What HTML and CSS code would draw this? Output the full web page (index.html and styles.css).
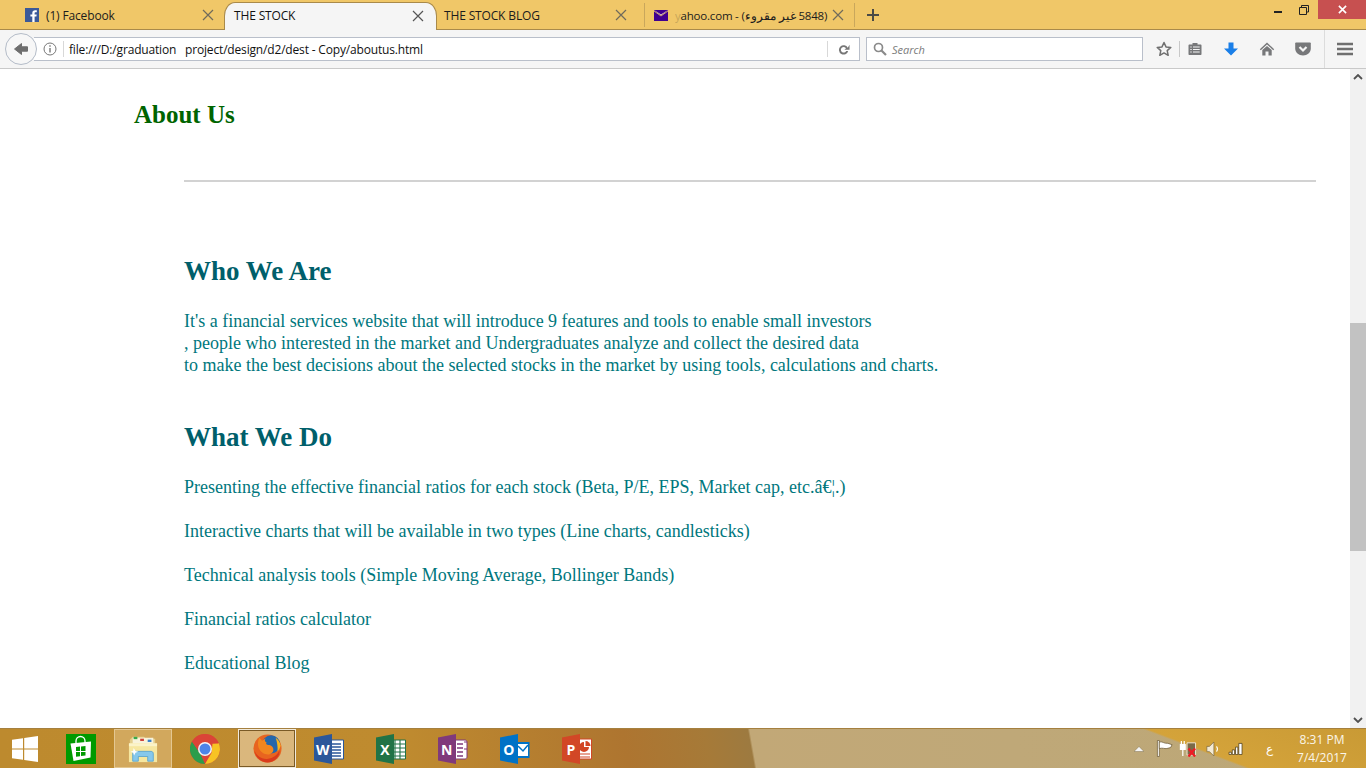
FILE: index.html
```html
<!DOCTYPE html>
<html lang="en">
<head>
<meta charset="utf-8">
<title>THE STOCK</title>
<link rel="stylesheet" href="styles.css">
</head>
<body>
<div class="browser">
  <header class="tabbar">
    <div class="tab tab-fb">
      <svg class="favicon" viewBox="0 0 14 14"><rect width="14" height="14" fill="#3b5998"/><path d="M9.6 14V8.6h1.8l.3-2.1H9.6V5.2c0-.6.2-1 1-1h1.2V2.3c-.3 0-.9-.1-1.700-.1-1.700 0-2.800 1-2.800 2.800v1.500H5.400v2.100h1.900V14z" fill="#fff"/></svg>
      <span class="tab-label">(1) Facebook</span>
      <svg class="tab-close" viewBox="0 0 12 12"><path d="M1 1l10 10M11 1L1 11" stroke="#6f6a5c" stroke-width="1.200" fill="none"/></svg>
    </div>
    <div class="tab tab-active">
      <span class="tab-label">THE STOCK</span>
      <svg class="tab-close" viewBox="0 0 12 12"><path d="M1 1l10 10M11 1L1 11" stroke="#555" stroke-width="1.200" fill="none"/></svg>
    </div>
    <div class="tab tab-blog">
      <span class="tab-label">THE STOCK BLOG</span>
      <svg class="tab-close" viewBox="0 0 12 12"><path d="M1 1l10 10M11 1L1 11" stroke="#6f6a5c" stroke-width="1.200" fill="none"/></svg>
    </div>
    <div class="tab tab-mail">
      <svg class="favicon-mail" viewBox="0 0 14 11"><rect width="14" height="11" fill="#400090"/><path d="M0 0l7 5.500L14 0z" fill="#f2e6cf"/><path d="M0 0h14L7 4.500z" fill="#400090"/><path d="M0 1l7 5 7-5" stroke="#f0c868" stroke-width=".8" fill="none"/></svg>
      <span class="tab-label mail-label" dir="ltr"><span class="fade">y</span>ahoo.com - (<span dir="rtl">5848 غير مقروء</span>)</span>
      <svg class="tab-close" viewBox="0 0 12 12"><path d="M1 1l10 10M11 1L1 11" stroke="#6f6a5c" stroke-width="1.200" fill="none"/></svg>
    </div>
    <div class="new-tab">
      <svg viewBox="0 0 12 12" class="plus"><path d="M6 0v12M0 6h12" stroke="#4a4a45" stroke-width="2" fill="none"/></svg>
    </div>
    <div class="window-controls">
      <div class="win-btn"><span class="win-min"></span></div>
      <div class="win-btn">
        <svg class="win-restore" viewBox="0 0 10 10"><path d="M2.500 2.500V.5h7v6.500H7.500M.5 2.500h7v7h-7z" stroke="#222" fill="none"/></svg>
      </div>
      <div class="win-close">
        <svg viewBox="0 0 10 10" class="win-x"><path d="M1 1l8 8M9 1l-8 8" stroke="#fff" stroke-width="1.800" fill="none"/></svg>
      </div>
    </div>
  </header>

  <nav class="navbar">
    <div class="back">
      <svg viewBox="0 0 16 16" class="back-icon"><path d="M8.500 2.500L1.500 8l7 5.500v-3.300h6V5.800h-6z" fill="#6e6e6e" stroke="#6e6e6e" stroke-linejoin="round"/></svg>
    </div>
    <div class="urlbar">
      <svg viewBox="0 0 14 14" class="info"><circle cx="7" cy="7" r="6" stroke="#777" fill="none"/><path d="M7 6v4.500M7 3.200v1.600" stroke="#777" stroke-width="1.400"/></svg>
      <span class="url-sep"></span>
      <span class="url-text">file:///D:/graduation&nbsp;&nbsp; project/design/d2/dest - Copy/aboutus.html</span>
      <span class="url-sep url-sep-right"></span>
      <svg viewBox="0 0 14 14" class="reload"><path d="M11.600 5.200A5 5 0 1 0 12 8.500H9.900A3 3 0 1 1 9.700 5.600L8 7.200h5.500V1.800z" fill="#777"/></svg>
    </div>
    <div class="searchbar">
      <svg viewBox="0 0 14 14" class="search-icon"><circle cx="5.500" cy="5.500" r="4" stroke="#8a8a8a" stroke-width="1.700" fill="none"/><path d="M8.500 8.500L13 13" stroke="#8a8a8a" stroke-width="2.200"/></svg>
      <span class="search-text">Search</span>
    </div>
    <svg viewBox="0 0 16 16" class="tool star"><path d="M8 1.500l2 4.400 4.800.5-3.600 3.200 1 4.700L8 11.900l-4.200 2.400 1-4.700L1.200 6.400 6 5.900z" stroke="#6f6f6f" stroke-width="1.500" fill="none" stroke-linejoin="round"/></svg>
    <span class="tool-sep"></span>
    <svg viewBox="0 0 16 16" class="tool clip"><path d="M2.500 3.500h3V2h5v1.500h3c.6 0 1 .4 1 1V13c0 .6-.4 1-1 1h-11c-.6 0-1-.4-1-1V4.500c0-.6.4-1 1-1z" fill="#77787a"/><path d="M3.300 6h1.400M6 6h6.700M3.300 8.500h1.400M6 8.500h6.700M3.300 11h1.400M6 11h6.700" stroke="#f5f5f5" stroke-width="1.200"/></svg>
    <svg viewBox="0 0 16 16" class="tool download"><path d="M5.500 1.500h5v6H15L8 14.500 1 7.500h4.500z" fill="#1a7fe8"/></svg>
    <svg viewBox="0 0 16 16" class="tool home"><path d="M8 1.500L.8 8.200l1 1L8 3.600l6.200 5.600 1-1z" fill="#77787a"/><path d="M3.300 9L8 4.900 12.700 9v5.500H9.500v-4h-3v4H3.300z" fill="#77787a"/></svg>
    <svg viewBox="0 0 16 16" class="tool pocket"><path d="M1 1.500h14c.5 0 .8.300.8.800V7.500c0 4-3.500 7-7.800 7S.2 11.500.2 7.500V2.300c0-.5.3-.8.800-.8z" fill="#77787a"/><path d="M4.500 6l3.500 3.500L11.500 6" stroke="#f5f5f5" stroke-width="2.200" fill="none"/></svg>
    <span class="tool-divider"></span>
    <svg viewBox="0 0 16 14" class="tool menu"><path d="M0 2h16M0 7h16M0 12h16" stroke="#6f6f6f" stroke-width="2.400"/></svg>
  </nav>

  <div class="viewport">
    <main class="page">
      <h2 class="page-title">About Us</h2>
      <div class="body-col">
        <hr class="rule">
        <h2 class="section who">Who We Are</h2>
        <p class="copy">It's a financial services website that will introduce 9 features and tools to enable small investors<br>, people who interested in the market and Undergraduates analyze and collect the desired data<br>to make the best decisions about the selected stocks in the market by using tools, calculations and charts.</p>
        <h2 class="section what">What We Do</h2>
        <p class="copy item">Presenting the effective financial ratios for each stock (Beta, P/E, EPS, Market cap, etc.â€¦.)</p>
        <p class="copy item">Interactive charts that will be available in two types (Line charts, candlesticks)</p>
        <p class="copy item">Technical analysis tools (Simple Moving Average, Bollinger Bands)</p>
        <p class="copy item">Financial ratios calculator</p>
        <p class="copy item">Educational Blog</p>
      </div>
    </main>
    <aside class="scrollbar">
      <div class="arrow"><svg viewBox="0 0 10 6" class="arrow-icon"><path d="M1 5l4-4 4 4" stroke="#505050" stroke-width="1.800" fill="none"/></svg></div>
      <div class="track"><div class="thumb"></div></div>
      <div class="arrow"><svg viewBox="0 0 10 6" class="arrow-icon"><path d="M1 1l4 4 4-4" stroke="#505050" stroke-width="1.800" fill="none"/></svg></div>
    </aside>
  </div>

  <footer class="taskbar">
    <div class="start">
      <svg viewBox="0 0 26 26" class="win-logo"><path d="M0 3.800l11-1.500v10.100H0zM12.200 2.100L26 0v12.400H12.200zM0 13.600h11v10.100L0 22.200zM12.200 13.600H26V26l-13.800-2z" fill="#fff"/></svg>
    </div>
    <div class="task">
      <svg viewBox="0 0 30 30" class="task-icon"><rect width="30" height="30" fill="#009a00"/><path d="M4.500 9.500L25 7.500l-.5 16L7.500 27z" fill="#fff"/><path d="M10 9V7a4.500 4.500 0 0 1 9 0v2" stroke="#fff" stroke-width="1.300" fill="none"/><path d="M10 13l4-.4v4.400h-4zM15 12.500l4.500-.4v4.900H15zM10 18h4v4.200l-4 .6zM15 18h4.500v3.500l-4.500.6z" fill="#009a00"/></svg>
    </div>
    <div class="task task-open">
      <svg viewBox="0 0 32 30" class="task-icon"><path d="M2 5l3-3h12l2 2h10v12H2z" fill="#e4cf8c"/><path d="M5 3h22v9H5z" fill="#f8f3da"/><path d="M6 2h4v2.500H6z" fill="#3aa94a"/><path d="M13 4h4v2.500h-4z" fill="#d0433a"/><path d="M21 5h4v2.500h-4z" fill="#3a80c9"/><path d="M1 9h30v20H1z" fill="#f6e7a0"/><path d="M1 9h30v3H1z" fill="#fbf3c8"/><path d="M5 28V20c0-1.500 1-2.500 2.500-2.500h17c1.500 0 2.500 1 2.500 2.500v8h-6v-5h-10v5z" fill="#86c8ec" stroke="#4d9ccc" stroke-width=".8"/><path d="M6 14l2 3 3 1-3 1-1.500 3-1-3-3-1 3-1z" fill="#fff"/></svg>
    </div>
    <div class="task">
      <svg viewBox="0 0 30 30" class="task-icon"><circle cx="15" cy="15" r="15" fill="#db4437"/><path d="M15 30A15 15 0 0 1 2 7.500L9.500 18 15 30z" fill="#2c9d4b"/><path d="M28.700 9A15 15 0 0 1 15 30l6.500-11 1-9.500z" fill="#f7c324"/><path d="M2 7.500L9 18l6-8.500h13.700A15 15 0 0 0 2 7.500z" fill="#db4437"/><circle cx="15" cy="15" r="7" fill="#f3f3f3"/><circle cx="15" cy="15" r="5.500" fill="#4b84e8"/></svg>
    </div>
    <div class="task task-active">
      <svg viewBox="0 0 32 32" class="task-icon fx"><circle cx="16" cy="16" r="15.500" fill="#e8641f"/><circle cx="20" cy="11.500" r="10" fill="#2467ab"/><path d="M25 4c3 2 5 5 5.500 9-.8 3-2 5-3.500 6 .5-4-.2-10-2-15z" fill="#f7b51e"/><path d="M7 4l3 3.500L14 5c-1.500 2-1 3.500 1 4.500-1 1-.5 2.500 1.500 2.500 3.500 0 6 2 6 5 0 3-2.500 5.500-6 5.500-4 0-9-3-10.500-8C5 11 5.500 7 7 4z" fill="#f1861f"/><path d="M1.500 18c2 6 8 10 14 9.500 7-.5 12-5 13.500-9.500 1 3-.5 6.500-3 9-3 3-6.500 4.500-10 4.500-7 0-13.500-5.500-14.500-13.500z" fill="#d93b1c"/></svg>
    </div>
    <div class="task">
      <svg viewBox="0 0 30 30" class="task-icon"><path d="M12 6h17.500v19H12z" fill="#fff" stroke="#2b579a"/><path d="M17 10h10M17 13h10M17 16h10M17 19h10M17 22h10" stroke="#2b579a" stroke-width="1.300"/><path d="M0 3.500L18 0v30L0 26.500z" fill="#2b579a"/><text x="8.800" y="21" class="office-letter">W</text></svg>
    </div>
    <div class="task">
      <svg viewBox="0 0 30 30" class="task-icon"><path d="M12 6h17.500v19H12z" fill="#fff" stroke="#217346"/><path d="M19 6v19M24 6v19M18 10h11M18 14h11M18 18h11M18 22h11" stroke="#217346" stroke-width="1.100"/><path d="M0 3.500L18 0v30L0 26.500z" fill="#217346"/><text x="8.800" y="21" class="office-letter">X</text></svg>
    </div>
    <div class="task">
      <svg viewBox="0 0 30 30" class="task-icon"><path d="M12 6h15c1 0 2 1 2 2v15c0 1-1 2-2 2H12z" fill="#fff" stroke="#80397b"/><path d="M19 10h6M19 14h6M19 18h6M19 22h6" stroke="#80397b" stroke-width="1.300"/><path d="M26 8h3M26 15h3" stroke="#80397b"/><path d="M0 3.500L18 0v30L0 26.500z" fill="#80397b"/><text x="8.800" y="21" class="office-letter">N</text></svg>
    </div>
    <div class="task">
      <svg viewBox="0 0 30 30" class="task-icon"><path d="M16 8h13.500v16H16z" fill="#0072c6"/><path d="M17.500 10h10.500v12H17.500z" fill="#fff"/><path d="M18 12l5 5 5-6" stroke="#0072c6" stroke-width="1.500" fill="none"/><path d="M0 3.500L18 0v30L0 26.500z" fill="#0072c6"/><text x="8.800" y="21" class="office-letter">O</text></svg>
    </div>
    <div class="task">
      <svg viewBox="0 0 30 30" class="task-icon"><path d="M12 5h17.500v20H12z" fill="#fff" stroke="#d24726"/><path d="M22 8a5 5 0 1 0 5 5h-5z" fill="#d24726"/><path d="M23.500 7a5 5 0 0 1 5 5h-5z" fill="#d24726"/><path d="M18 20h10M18 23h10" stroke="#d24726" stroke-width="1.200"/><path d="M0 3.500L18 0v30L0 26.500z" fill="#d24726"/><text x="8.800" y="21" class="office-letter">P</text></svg>
    </div>
    <div class="tray">
      <svg viewBox="0 0 10 6" class="tray-up"><path d="M0 5.500L5 .5l5 5z" fill="#f4f4f4" stroke="#6a5a3a" stroke-width=".4"/></svg>
      <svg viewBox="0 0 18 18" class="tray-flag"><path d="M1.500 .5h2v17h-2z" fill="#fff" stroke="#5e4c28" stroke-width=".7"/><path d="M3.500 2c4-.5 5 2 9 1.500L17 5l-1.500 3-4 1c-3 .5-4-1-8 0z" fill="#fff" stroke="#5e4c28" stroke-width=".7"/></svg>
      <svg viewBox="0 0 18 18" class="tray-power"><path d="M1 5h5v5H1zM2 1v4M5 1v4M3.500 10v7" stroke="#fff" stroke-width="1.300" fill="#fff"/><path d="M8 3h9v13H8z" fill="#7a6a48" stroke="#f2ead8"/><path d="M9.500 9l7 8.500M16.500 9l-7 8.500" stroke="#ee1c25" stroke-width="2.400"/></svg>
      <svg viewBox="0 0 16 18" class="tray-sound"><path d="M1 6h3l5-5v16l-5-5H1z" fill="#f3ead6" stroke="#6a5a3a" stroke-width=".7"/><path d="M12 6c1.500 2 1.500 4 0 6" stroke="#fff" fill="none" stroke-width="1.200"/></svg>
      <svg viewBox="0 0 16 14" class="tray-signal"><path d="M.5 11h2.500v2.500H.5zM4 8.500h2.500v5H4zM7.500 5.500H10v8H7.500zM11 1.500h3.500v12H11z" fill="#fff" stroke="#4a3a18" stroke-width=".8"/></svg>
      <span class="tray-lang">ع</span>
      <div class="clock"><span>8:31 PM</span><span>7/4/2017</span></div>
    </div>
  </footer>
</div>
</body>
</html>
```

FILE: styles.css
```css
* { box-sizing: border-box; }
html, body { margin: 0; height: 100%; overflow: hidden; }
body { font-family: "Liberation Serif", "Times New Roman", serif; background: #fff; }

.browser { width: 1366px; height: 768px; display: flex; flex-direction: column; }

/* Tab strip */
.tabbar {
  height: 30px; flex: none; display: flex; align-items: stretch;
  background: #f0c768; border-bottom: 1px solid #a98a4a;
  font-family: "Open Sans", "Noto Sans", sans-serif; font-size: 12px; color: #1c1c1c;
}
.tab { display: flex; align-items: center; flex: none; }
.tab-label { white-space: nowrap; flex: 1; letter-spacing: -.15px; }
.tab-close { width: 12px; height: 12px; flex: none; }
.tab-fb { width: 224px; padding: 1px 10px 0 25px; }
.favicon { width: 14px; height: 14px; margin-right: 7px; flex: none; }
.tab-active {
  width: 213px; padding: 0 12px 2px 9px; margin-top: 2px; margin-bottom: -1px;
  background: #f5f5f5; border-radius: 11px 11px 0 0 / 14px 14px 0 0;
  border: 1px solid #a98a4a; border-bottom: none; color: #111;
}
.tab-blog { width: 208px; padding: 1px 17px 0 7px; border-right: 1px solid #c9a75c; height: 24px; align-self: center; }
.tab-mail { width: 210px; padding: 1px 10px 0 9px; border-right: 1px solid #c9a75c; height: 24px; align-self: center; }
.favicon-mail { width: 14px; height: 11px; margin-right: 7px; flex: none; }
.mail-label { letter-spacing: -.2px; font-size: 11.500px; }
.fade { opacity: .2; }
.new-tab { width: 36px; display: flex; align-items: center; justify-content: center; }
.plus { width: 12px; height: 12px; }
.window-controls { margin-left: auto; display: flex; align-items: flex-start; }
.win-btn { width: 29px; height: 19px; display: flex; align-items: center; justify-content: center; }
.win-min { width: 8px; height: 2px; background: #222; margin-top: 5px; margin-left: 7px; }
.win-restore { width: 10px; height: 10px; }
.win-close { width: 48px; height: 19px; background: #c75050; display: flex; align-items: center; justify-content: center; }
.win-x { width: 9px; height: 9px; }

/* Navigation toolbar */
.navbar {
  height: 39px; flex: none; display: flex; align-items: center;
  background: #f5f5f5; border-bottom: 1px solid #c9c9c9; padding-left: 5px;
}
.back {
  width: 32px; height: 32px; flex: none; border-radius: 50%; border: 1px solid #b4bcc8; background: #f7f7f7;
  display: flex; align-items: center; justify-content: center; z-index: 1; margin-right: -3px;
}
.back-icon { width: 16px; height: 16px; }
.urlbar {
  width: 826px; height: 24px; flex: none; margin-right: 6px; display: flex; align-items: center;
  background: #fff; border: 1px solid #b9bfca; border-left: none; padding-left: 9px;
  font-family: "Open Sans", "Noto Sans", sans-serif; font-size: 12px; color: #111;
}
.info { width: 14px; height: 14px; flex: none; }
.url-sep { width: 1px; height: 16px; background: #d8d8d8; margin: 0 5px 0 6px; flex: none; }
.url-text { flex: 1; white-space: nowrap; letter-spacing: -.17px; }
.url-sep-right { margin: 0 9px 0 0; }
.reload { width: 13px; height: 13px; margin-right: 9px; flex: none; }
.searchbar {
  width: 277px; height: 24px; flex: none; display: flex; align-items: center; padding-left: 6px;
  background: #fff; border: 1px solid #b9bfca;
  font-family: "Open Sans", "Noto Sans", sans-serif; font-size: 11px; font-style: italic; color: #7b7b7b;
}
.search-icon { width: 14px; height: 14px; margin-right: 5px; flex: none; }
.tool { flex: none; }
.star { width: 16px; height: 16px; margin-left: 13px; }
.tool-sep { width: 1px; height: 16px; background: #c8c8c8; margin: 0 7px 0 7px; flex: none; }
.clip { width: 16px; height: 16px; }
.download { width: 16px; height: 16px; margin-left: 20px; }
.home { width: 16px; height: 16px; margin-left: 20px; }
.pocket { width: 16px; height: 16px; margin-left: 20px; }
.tool-divider { width: 1px; height: 38px; background: #dcdcdc; margin: 0 12px 0 13px; flex: none; }
.menu { width: 16px; height: 14px; }

/* Page area */
.viewport { flex: 1; min-height: 0; display: flex; background: #fff; }
.page { flex: 1; min-width: 0; padding: 32px 34px 0 134px; overflow: hidden; }
.page-title { margin: 0; font-size: 25px; line-height: 28px; font-weight: bold; color: #006400; }
.body-col { padding-left: 50px; }
.rule { border: none; height: 2px; background: #d2d2d2; margin: 51px 0 0; }
.section { margin: 0; font-size: 27px; line-height: 30px; font-weight: bold; color: #005f6b; }
.who { margin-top: 74px; }
.what { margin-top: 46px; }
.copy { margin: 24px 0 0; font-size: 18px; line-height: 22px; color: #00777d; }
.item { margin-top: 22px; }
.what + .item { margin-top: 24px; }

/* Scrollbar */
.scrollbar { width: 16px; flex: none; display: flex; flex-direction: column; background: #f1f1f1; }
.arrow { height: 16px; flex: none; display: flex; align-items: center; justify-content: center; }
.arrow-icon { width: 10px; height: 6px; }
.track { flex: 1; padding-top: 238px; }
.thumb { height: 228px; background: #c2c2c2; }

/* Taskbar */
.taskbar {
  height: 40px; flex: none; display: flex; align-items: center;
  border-top: 1px solid #a5803f;
  background:
    linear-gradient(20.8deg, transparent 442px, #d4a33a 444px, #c99a35 522px),
    linear-gradient(80deg, #bd8a2e 0, #bf8b2f 400px, #ae7530 620px, #a67a38 700px, #9d7a40 743px, #c2a877 745px, #bfa878 1000px, #bba777 1366px);
}
.start { width: 50px; flex: none; display: flex; justify-content: center; }
.win-logo { width: 26px; height: 26px; }
.task { width: 62px; height: 39px; flex: none; display: flex; align-items: center; justify-content: center; }
.task-icon { width: 30px; height: 30px; display: block; }
.task-open { width: 58px; margin: 0 2px; background: rgba(235, 205, 150, .45); border: 1px solid rgba(240, 220, 180, .6); }
.task-active { width: 58px; margin: 0 2px; background: rgba(240, 220, 190, .55); border: 1px solid #f1eadc; box-shadow: 0 0 0 1px #7a5a26 inset; }
.fx { width: 29px; height: 29px; }
.office-letter { font-family: "Open Sans", "Noto Sans", sans-serif; font-size: 14px; font-weight: 700; fill: #fff; text-anchor: middle; }
.tray {
  margin-left: auto; display: flex; align-items: center; color: #fff;
  font-family: "Open Sans", "Noto Sans", sans-serif;
}
.tray-up { width: 10px; height: 6px; margin-right: 12px; }
.tray-flag { width: 17px; height: 17px; margin-right: 6px; }
.tray-power { width: 18px; height: 17px; margin-right: 9px; }
.tray-sound { width: 14px; height: 16px; margin-right: 8px; }
.tray-signal { width: 16px; height: 13px; margin-right: 19px; }
.tray-lang { font-size: 12px; width: 12px; margin-right: 17px; text-align: center; }
.clock { width: 60px; margin-right: 14px; display: flex; flex-direction: column; align-items: center; font-size: 12px; line-height: 18px; color: #fbf6ea; }
```
